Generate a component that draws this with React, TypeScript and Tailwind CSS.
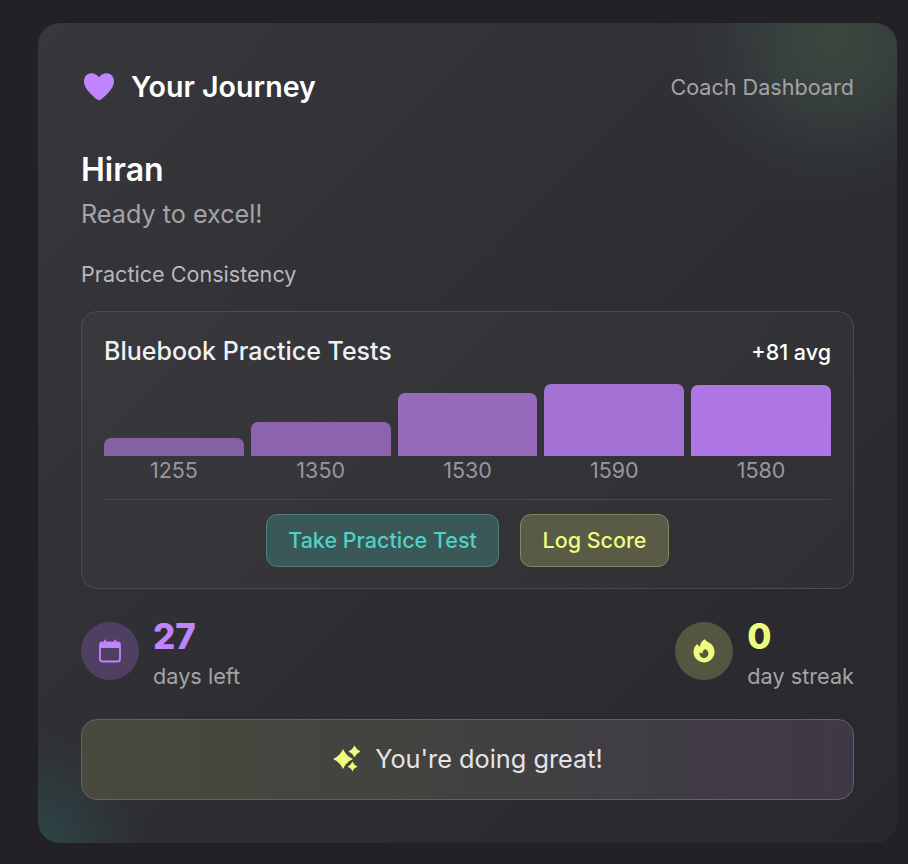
import React from "react";
import { HiFire } from "react-icons/hi2";

const scores = [
  { value: 1255, height: "h-[18px]", color: "bg-[#8461a2]" },
  { value: 1350, height: "h-[34px]", color: "bg-[#8c63ae]" },
  { value: 1530, height: "h-[63px]", color: "bg-[#976abb]" },
  { value: 1590, height: "h-[72px]", color: "bg-[#a271d3]" },
  { value: 1580, height: "h-[71px]", color: "bg-[#ae77e5]" },
];

function HeartIcon() {
  return (
    <svg width="32" height="30" viewBox="0 0 32 30" fill="#c084fc">
      <path d="M16 5.2C13.8 2.4 11.2 1.2 8.6 1.2 4.2 1.2 1 4.7 1 9.2c0 4.6 2.9 8.6 6.4 12.2 2.2 2.3 4.8 4.6 6.7 6.2 1.1.9 2.7.9 3.8 0 1.9-1.6 4.5-3.9 6.7-6.2C28.1 17.8 31 13.8 31 9.2c0-4.5-3.2-8-7.6-8-2.6 0-5.2 1.2-7.4 4Z" />
    </svg>
  );
}

function CalendarIcon() {
  return (
    <svg width="24" height="24" viewBox="0 0 24 24" fill="none">
      <path d="M7 1.5v3M17 1.5v3" stroke="#c084fc" strokeWidth="1.8" strokeLinecap="round" />
      <path d="M4.5 3h15A2.5 2.5 0 0 1 22 5.5V9H2V5.5A2.5 2.5 0 0 1 4.5 3Z" fill="#c084fc" />
      <rect x="2" y="3.5" width="20" height="19" rx="2.5" stroke="#c084fc" strokeWidth="1.8" />
    </svg>
  );
}

function SparkleIcon() {
  return (
    <svg width="30" height="30" viewBox="0 0 30 30" fill="#ecfc7f">
      <path d="M11 5Q14 12 21 15Q14 18 11 25Q8 18 1 15Q8 12 11 5Z" />
      <path d="M22.5 1.5Q24.3 5.7 28.5 7.5Q24.3 9.3 22.5 13.5Q20.7 9.3 16.5 7.5Q20.7 5.7 22.5 1.5Z" />
      <path d="M20.5 17.5Q22 21 25.5 22.5Q22 24 20.5 27.5Q19 24 15.5 22.5Q19 21 20.5 17.5Z" />
    </svg>
  );
}

function Stat({ icon, circle, value, valueColor, label }: { icon: React.ReactNode; circle: string; value: string; valueColor: string; label: string }) {
  return (
    <div className="flex items-start gap-[14px]">
      <div className={`mt-[4px] w-[58px] h-[58px] rounded-full flex items-center justify-center ${circle}`}>{icon}</div>
      <div className="flex flex-col">
        <span className={`text-[35px] leading-[36px] font-extrabold ${valueColor}`}>{value}</span>
        <span className="mt-[9px] text-[21.7px] leading-[26px] text-[#a3a3a8]">{label}</span>
      </div>
    </div>
  );
}

export default function App() {
  return (
    <div className="min-h-[864px] bg-[#212126] pt-[23px] pl-[38px] font-['Inter',sans-serif]">
      <div className="relative w-[859px] h-[820px] rounded-[22px] overflow-hidden bg-[linear-gradient(135deg,#38383c_0%,#2d2d32_55%,#28282d_100%)] px-[43px] pt-[43px]">
        <div className="absolute -top-[150px] -right-[110px] w-[340px] h-[340px] rounded-full bg-[radial-gradient(circle,rgba(134,190,110,0.17)_0%,rgba(120,190,140,0.12)_25%,rgba(110,190,150,0.05)_45%,rgba(110,190,150,0.015)_60%,transparent_70%)]" />
        <div className="absolute -bottom-[120px] -left-[120px] w-[240px] h-[240px] rounded-full bg-[radial-gradient(circle,rgba(45,212,191,0.14)_0%,rgba(45,212,191,0.07)_30%,rgba(45,212,191,0.02)_55%,transparent_70%)]" />

        <div className="relative">
          <div className="flex items-center justify-between h-[42px]">
            <div className="flex items-center gap-[16px] pl-[2px]">
              <HeartIcon />
              <span className="text-[28.6px] font-semibold text-white">Your Journey</span>
            </div>
            <span className="text-[21.6px] text-[#a3a3a8]">Coach Dashboard</span>
          </div>

          <div className="mt-[42px] text-[32px] leading-[40px] font-semibold text-white">Hiran</div>
          <div className="mt-[8px] text-[25.2px] leading-[32px] text-[#a3a3a8]">Ready to excel!</div>
          <div className="mt-[30px] text-[21.6px] leading-[28px] text-[#b8b8bc]">Practice Consistency</div>

          <div className="mt-[23px] h-[278px] rounded-[16px] border border-[#4b4b50] bg-[linear-gradient(135deg,#38383d,#2f2f34)] px-[22px] pt-[22px]">
            <div className="flex items-center justify-between h-[36px]">
              <span className="text-[25px] font-medium text-[#f0f0f2]">Bluebook Practice Tests</span>
              <span className="text-[21.5px] font-medium text-white">+81 avg</span>
            </div>
            <div className="mt-[14px] flex items-end gap-[7px] h-[72px]">
              {scores.map((s) => (
                <div key={s.value} className={`flex-1 rounded-t-[7px] ${s.height} ${s.color}`} />
              ))}
            </div>
            <div className="flex gap-[7px] h-[28px] items-center">
              {scores.map((s) => (
                <div key={s.value} className="flex-1 text-center text-[21.5px] text-[#97979e]">{s.value}</div>
              ))}
            </div>
            <div className="mt-[15px] border-t border-[#46464b]" />
            <div className="mt-[14px] flex justify-center gap-[21px]">
              <button className="w-[233px] h-[53px] rounded-[11px] border border-[#4f7f7b] bg-[#3b5858] text-[21.5px] font-medium text-[#4fd1c5]">Take Practice Test</button>
              <button className="w-[149px] h-[53px] rounded-[11px] border border-[#84875f] bg-[#595b46] text-[21.5px] font-medium text-[#ecfc7f]">Log Score</button>
            </div>
          </div>

          <div className="mt-[29px] flex items-start justify-between">
            <Stat icon={<CalendarIcon />} circle="bg-[#4f3f63]" value="27" valueColor="text-[#c084fc]" label="days left" />
            <Stat icon={<HiFire size={28} color="#ecfc7f" />} circle="bg-[#55563f]" value="0" valueColor="text-[#ecfc7f]" label="day streak" />
          </div>

          <div className="mt-[30px] h-[81px] pb-[2px] rounded-[16px] border border-[#62645a] bg-[linear-gradient(90deg,#484a3c,#424240_45%,#3f3848)] flex items-center justify-center gap-[13px]">
            <SparkleIcon />
            <span className="text-[25.3px] text-[#e4e4e7]">You're doing great!</span>
          </div>
        </div>
      </div>
    </div>
  );
}
